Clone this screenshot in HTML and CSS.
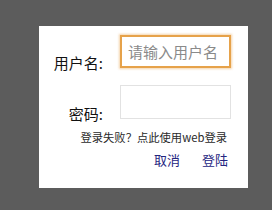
FILE: index.html
```html
<!DOCTYPE html>
<html lang="zh">
<head>
<meta charset="utf-8">
<link rel="stylesheet" href="styles.css">
</head>
<body>
<div class="dialog">
  <div class="form">
    <div class="row">
      <label class="label">用户名:</label>
      <div class="input focus"><span class="placeholder">请输入用户名</span></div>
    </div>
    <div class="row second">
      <label class="label">密码:</label>
      <div class="input"></div>
    </div>
  </div>
  <div class="hint">登录失败？点此使用web登录</div>
  <div class="actions">
    <span class="btn">取消</span>
    <span class="btn">登陆</span>
  </div>
</div>
</body>
</html>
```
FILE: styles.css
```css
html, body {
  margin: 0;
  padding: 0;
}
body {
  width: 272px;
  height: 210px;
  background: #5c5c5c;
  font-family: "Noto Sans CJK SC", "Noto Sans", sans-serif;
  overflow: hidden;
}
.dialog {
  margin: 26px 0 0 39px;
  width: 209px;
  height: 162px;
  background: #ffffff;
  box-sizing: border-box;
  padding: 9px 17px 0 0;
  display: flex;
  flex-direction: column;
}
.form {
  display: flex;
  flex-direction: column;
  gap: 17px;
}
.row {
  display: grid;
  grid-template-columns: 64px 111px;
  column-gap: 17px;
  align-items: end;
}
.label {
  justify-self: end;
  font-size: 15px;
  line-height: 15px;
  color: #111;
  margin-bottom: -2px;
}
.input {
  height: 34px;
  box-sizing: border-box;
  border: 1px solid #e2e2e2;
  background: #fff;
  display: flex;
  align-items: center;
  padding-left: 7px;
}
.input.focus {
  height: 33px;
  border: 2px solid #e6a24a;
  box-shadow: 0 0 2px 1px rgba(230, 160, 70, 0.45);
  padding-left: 6px;
}
.placeholder {
  font-size: 15px;
  color: #8a8a8a;
  line-height: 1;
}
.hint {
  margin-top: 11px;
  text-align: right;
  padding-right: 4px;
  font-size: 11.3px;
  line-height: 14px;
  color: #2a2a2a;
}
.actions {
  margin-top: 8px;
  display: flex;
  justify-content: flex-end;
  gap: 22px;
  padding-right: 3px;
}
.btn {
  font-size: 13px;
  line-height: 16px;
  color: #25257f;
}
```
